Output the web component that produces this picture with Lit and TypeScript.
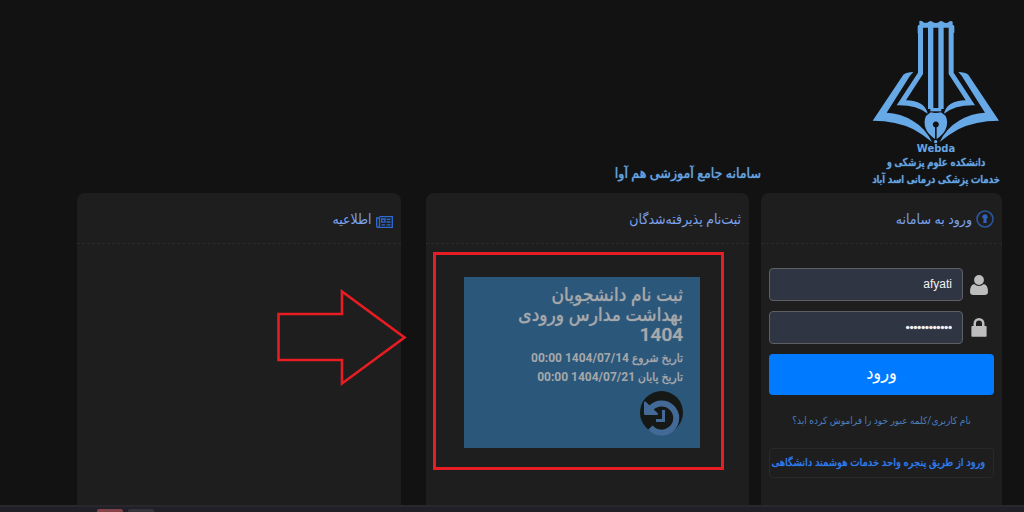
import { LitElement, html, css, svg } from "lit";
import { customElement } from "lit/decorators.js";

const bookHalf = svg`
  <path d="M160 186 Q140 186 130 194 L38 332 Q110 332 160 358 Q192 376 216 396 Q196 354 158 332 Q122 310 80 308 L150 197 Z"/>
  <path d="M174 46 V188 L110 286 Q168 284 203 311 Q194 272 138 271 L189 192 V46 Z"/>`;

@customElement("app-root")
export class AppRoot extends LitElement {
  static styles = css`
    :host {
      display: flex;
      flex-direction: column;
      min-height: 100vh;
      box-sizing: border-box;
      background: #121212;
      direction: rtl;
      font-family: Roboto, "DejaVu Sans Condensed", "DejaVu Sans", sans-serif;
      overflow: hidden;
    }
    * { box-sizing: border-box; }
    h1, h2, h3, p { margin: 0; font-weight: 400; }
    a { text-decoration: none; }
    svg { display: block; flex: none; }

    .top { display: flex; align-items: flex-end; padding: 20px 22px 0 77px; }
    .brand { flex: 241 1 0; display: flex; }
    .logo { display: flex; flex-direction: column; align-items: center; min-width: 132px; color: #64a5e3; }
    .logo .mark { fill: #67a8e6; }
    .logo .latin { font: 700 10px/10px "DejaVu Sans", sans-serif; }
    .logo .name {
      font-size: 11px;
      line-height: 17px;
      text-align: center;
      white-space: nowrap;
      text-shadow: 0 0 1px currentColor, 0 0 1px currentColor;
    }
    .system {
      flex: 684 1 0;
      font-size: 14px;
      line-height: 20px;
      padding-bottom: 5px;
      color: #64a5e3;
      text-shadow: 0 0 1px currentColor;
    }

    main { flex: 1; display: flex; gap: 12px; padding: 5px 22px 0 77px; }
    .login { flex: 241 1 0; min-width: 0; }
    .boards { flex: 672 1 0; display: grid; grid-template-columns: 1fr 1fr; gap: 25px; min-width: 0; }
    .card { background: #1e1e1e; border-radius: 8px 8px 0 0; min-width: 0; }
    .head {
      display: flex;
      align-items: center;
      gap: 4px;
      height: 51px;
      padding: 2px 8px 0;
      border-bottom: 1px dashed #2b2b2b;
      color: #7aa2ee;
    }
    .head h2 { font-size: 14px; line-height: 20px; }
    .news { margin-top: 6px; }

    form { display: flex; flex-direction: column; padding: 24px 8px 0; }
    .field { display: flex; align-items: center; margin-bottom: 10px; }
    .field label { width: 31px; display: flex; justify-content: center; fill: #bdbdbd; }
    .field input {
      flex: 1;
      min-width: 0;
      height: 33px;
      padding: 0 10px 2px;
      border: 1px solid #5e6066;
      border-radius: 4px;
      background: #2f3542;
      color: #f2f2f2;
      font: 12px "Liberation Sans", sans-serif;
      text-align: right;
      direction: ltr;
      outline: none;
    }
    .field .secret { font-size: 11px; text-shadow: 0 0 1px currentColor; }
    .submit {
      height: 41px;
      border: 0;
      border-radius: 4px;
      background: #007bff;
      color: #fff;
      font: 18px "DejaVu Sans Condensed", "DejaVu Sans", sans-serif;
      padding: 0 0 4px;
    }
    .forgot {
      margin-top: 16px;
      font-size: 10px;
      line-height: 20px;
      text-align: center;
      white-space: nowrap;
      color: #4c7fbe;
    }
    .portal {
      margin-top: 17px;
      border: 1px solid #292929;
      border-radius: 4px;
      padding: 0 8px 0 0;
      font-size: 11px;
      line-height: 28px;
      text-shadow: 0 0 1px currentColor;
      white-space: nowrap;
      color: #2f7bf0;
    }

    .slot { position: relative; margin: 33px 49px 0 38px; }
    .tile {
      display: flex;
      flex-direction: column;
      align-items: flex-start;
      padding: 8px 17px 12px 32px;
      background: #2b577b;
      color: #a5a8aa;
    }
    .tile h3 { font-size: 19px; font-weight: 500; line-height: 20px; text-shadow: 0 0 1px currentColor; }
    .dates { margin: 4px 0; font-size: 12px; line-height: 19px; text-shadow: 0 0 1px currentColor; }
    .dates bdi { font-weight: 700; text-shadow: none; }
    .frame { position: absolute; inset: -25px -24px -22px -31px; border: 3px solid #e81c23; pointer-events: none; }

    .notice { position: relative; }
    .arrow { position: absolute; top: 96px; right: -7px; }

    .taskbar {
      display: flex;
      direction: ltr;
      align-items: flex-end;
      gap: 5px;
      height: 7px;
      padding-left: 97px;
      background: #211f28;
      border-top: 2px solid #27272c;
    }
    .tab { width: 26px; height: 3px; border-radius: 2px 2px 0 0; background: #34343a; }
    .tab.active { background: #844249; }
  `;

  render() {
    return html`
      <header class="top">
        <div class="brand">
          <div class="logo">
            <svg class="mark" width="128" height="124" viewBox="36 30 384 372">
              ${bookHalf}
              <g transform="matrix(-1 0 0 1 455 0)">${bookHalf}</g>
              <path d="M178 33 Q186 31 192 38 Q201 40 206 35 Q213 30 219 37 Q228 41 236 37 Q243 30 250 36 Q258 41 265 37 Q272 30 278 35 V44 L283 49 V68 H267 V53 H251 V297 H235 V53 H220 V297 H204 V53 H189 V70 H173 V49 L178 44 Z"/>
              <rect x="211" y="294" width="33" height="10"/>
              <path fill-rule="evenodd" d="M212 307 Q227 311 243 307 L257 318 Q266 337 257 358 Q250 374 230 387 V352 A9 9 0 1 0 225 352 V387 Q205 374 198 358 Q189 337 198 318 Z"/>
              <circle cx="227" cy="395" r="5"/>
            </svg>
            <span class="latin">Webda</span>
            <span class="name">دانشکده علوم پزشکی و<br />خدمات پزشکی درمانی اسد آباد</span>
          </div>
        </div>
        <h1 class="system">سامانه جامع آموزشی هم آوا</h1>
      </header>

      <main>
        <section class="card login">
          <div class="head">
            <svg width="18" height="18" viewBox="0 0 18 18">
              <circle cx="9" cy="9" r="8" fill="none" stroke="#2c559b" stroke-width="1.6"/>
              <path fill="#2f62ba" d="M9 4.2a2.6 2.6 0 0 1 1.3 4.9l.5 4H7.2l.5-4A2.6 2.6 0 0 1 9 4.2Z"/>
            </svg>
            <h2>ورود به سامانه</h2>
          </div>
          <form @submit=${(e: Event) => e.preventDefault()}>
            <div class="field">
              <label for="user" aria-label="نام کاربری">
                <svg width="18" height="20" viewBox="0 0 18 20">
                  <circle cx="9" cy="5" r="4.9"/>
                  <path d="M4 9 Q9 13 14 9 Q18 10 18 17 Q18 20 14.5 20 H3.5 Q0 20 0 17 Q0 10 4 9Z"/>
                </svg>
              </label>
              <input id="user" type="text" value="afyati" autocomplete="off" />
            </div>
            <div class="field">
              <label for="pass" aria-label="کلمه عبور">
                <svg width="16" height="19" viewBox="0 0 16 19">
                  <path fill-rule="evenodd" d="M2.5 8V5.5a5.5 5.5 0 0 1 11 0V8H15q.6 0 .6.8V18q0 .8-.8.8H1.2Q.4 18.8.4 18V8.8Q.4 8 1.2 8ZM5 8h6V5.5a3 3 0 0 0-6 0Z"/>
                </svg>
              </label>
              <input id="pass" class="secret" type="password" value="123456789012" autocomplete="off" />
            </div>
            <button class="submit" type="submit">ورود</button>
            <a class="forgot" href="#">نام کاربری/کلمه عبور خود را فراموش کرده اید؟</a>
            <a class="portal" href="#">ورود از طریق پنجره واحد خدمات هوشمند دانشگاهی</a>
          </form>
        </section>

        <div class="boards">
          <section class="card">
            <div class="head"><h2>ثبت‌نام پذیرفته‌شدگان</h2></div>
            <div class="slot">
              <div class="tile">
                <h3>ثبت نام دانشجویان بهداشت مدارس ورودی 1404</h3>
                <div class="dates">
                  <p>تاریخ شروع <bdi>1404/07/14</bdi> <bdi>00:00</bdi></p>
                  <p>تاریخ پایان <bdi>1404/07/21</bdi> <bdi>00:00</bdi></p>
                </div>
                <svg width="43" height="45" viewBox="0 0 43 45">
                  <circle cx="21.5" cy="21.5" r="21.5" fill="#161816"/>
                  <path d="M11 17 A14.6 14.6 0 1 1 10.5 36.5" fill="none" stroke="#436a96" stroke-width="6"/>
                  <path d="M5 11.5 V23 H17 Z" fill="#436a96" stroke="#436a96" stroke-width="2" stroke-linejoin="round"/>
                  <path d="M23.5 19 V29.5 H16" fill="none" stroke="#436a96" stroke-width="3"/>
                </svg>
              </div>
              <div class="frame"></div>
            </div>
          </section>

          <section class="card notice">
            <div class="head">
              <svg class="news" width="17" height="12" viewBox="0 0 17 12">
                <g fill="none" stroke="#2d6bd4" stroke-width="1.3">
                  <path d="M3.5 .7 H16.3 V11.3 H2 Q.7 11.3 .7 10 V2 H3.5 V10 Q3.5 11.3 2 11.3"/>
                  <path d="M5.7 3 H9 V6.2 H5.7 Z M10.5 3.3 H14.5 M10.5 6 H14.5 M5.5 8.8 H9 M10.5 8.8 H14.5"/>
                </g>
              </svg>
              <h2>اطلاعیه</h2>
            </div>
            <svg class="arrow" width="132" height="98" viewBox="0 0 132 98">
              <path d="M2.5 25 H66 V2.5 L128.5 48.5 L66 94.5 V71 H2.5 Z" fill="none" stroke="#e81c23" stroke-width="2.6"/>
            </svg>
          </section>
        </div>
      </main>

      <footer class="taskbar"><span class="tab active"></span><span class="tab"></span></footer>
    `;
  }
}
